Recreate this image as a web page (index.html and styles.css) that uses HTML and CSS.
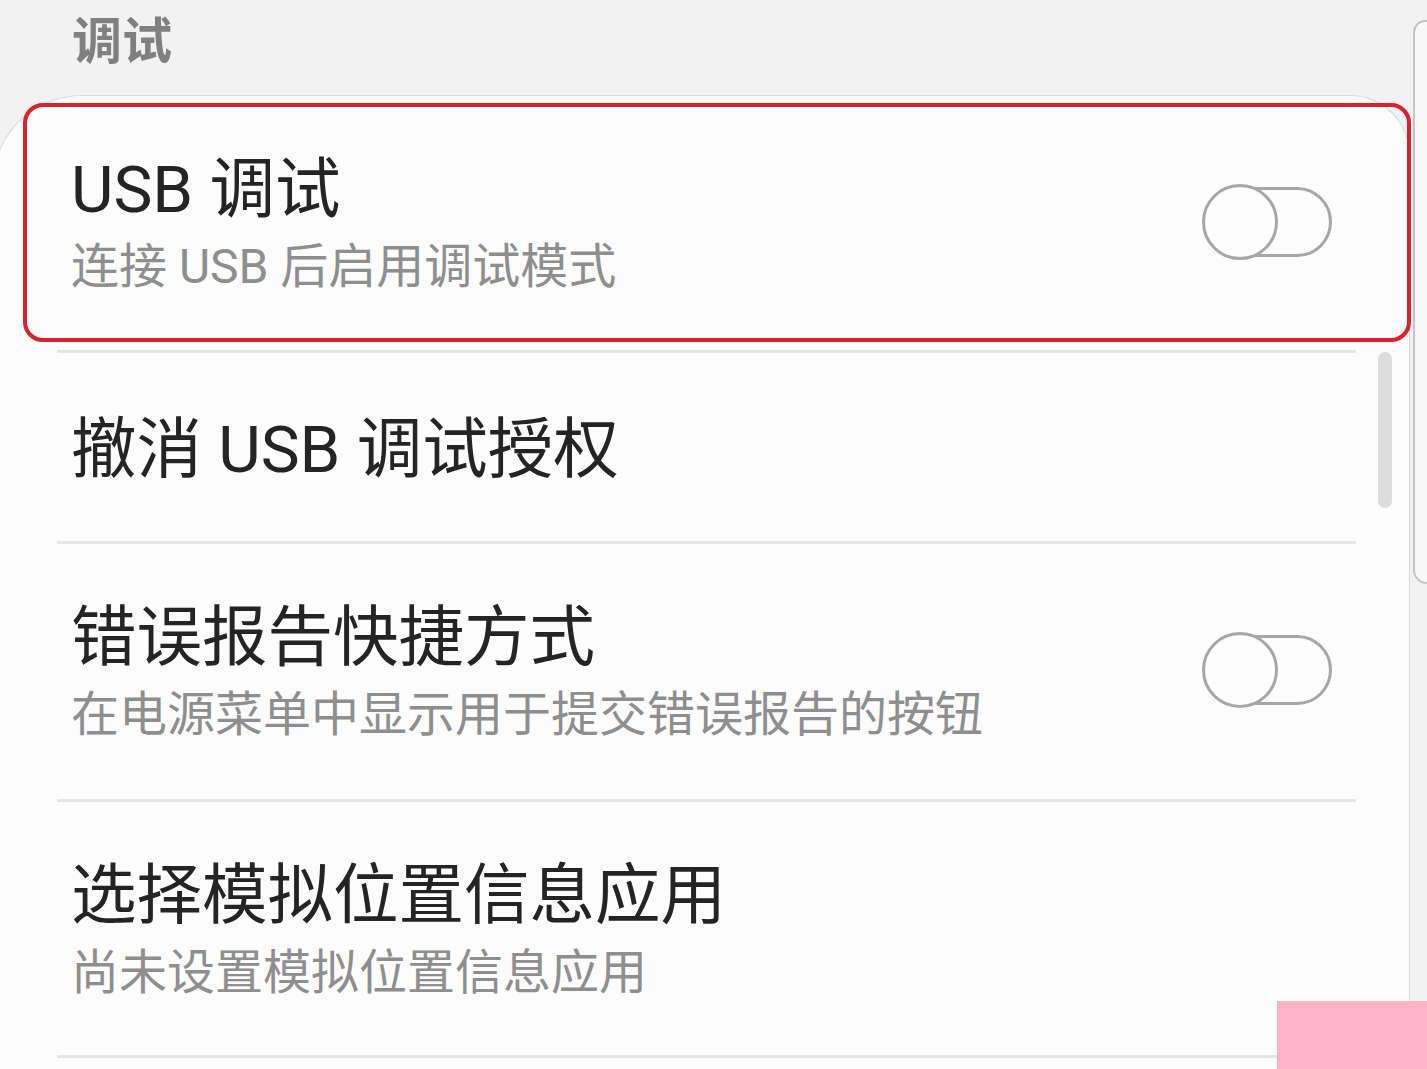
FILE: index.html
```html
<!DOCTYPE html>
<html lang="zh-CN">
<head>
  <meta charset="UTF-8" />
  <meta name="viewport" content="width=device-width, initial-scale=1.0"/>
  <title>开发者选项 - 调试</title>
  <link rel="stylesheet" href="styles.css">
</head>
<body>
  <div class="screen">
    <h2 class="section-title">调试</h2>

    <div class="card">
      <!-- highlight around the first option -->
      <div class="highlight"></div>
      <div class="scrollbar"></div>

      <div class="row first">
        <div class="text">
          <div class="title">USB 调试</div>
          <div class="summary">连接 USB 后启用调试模式</div>
        </div>
        <div class="toggle"><div class="knob"></div></div>
      </div>
      <div class="sep"></div>

      <div class="row single">
        <div class="text">
          <div class="title">撤消 USB 调试授权</div>
        </div>
      </div>
      <div class="sep"></div>

      <div class="row">
        <div class="text">
          <div class="title">错误报告快捷方式</div>
          <div class="summary">在电源菜单中显示用于提交错误报告的按钮</div>
        </div>
        <div class="toggle"><div class="knob"></div></div>
      </div>
      <div class="sep"></div>

      <div class="row last">
        <div class="text">
          <div class="title">选择模拟位置信息应用</div>
          <div class="summary">尚未设置模拟位置信息应用</div>
        </div>
      </div>
      <div class="sep"></div>
    </div>
  </div>

  <div class="edge"></div>

  <div class="corner-tag"></div>
</body>
</html>
```

FILE: styles.css
```css
body {
  margin: 0;
  background: #f2f2f2;
  font-family: Roboto, "Noto Sans CJK SC", sans-serif;
  display: flex;
  align-items: flex-start;
  height: 100vh;
  overflow: hidden;
}

.screen {
  width: 1413px;
  flex-shrink: 0;
}

.section-title {
  margin: 0;
  padding: 12px 0 0 72px;
  height: 60px;
  font-size: 50px;
  line-height: 60px;
  font-weight: 700;
  color: #808080;
}

.card {
  position: relative;
  margin: 23px 3px 0 -8px;
  height: 1000px;
  background: #fcfcfc;
  border: 1px solid #d9d9d9;
  border-bottom: none;
  border-radius: 90px 60px 0 0;
}

.highlight {
  position: absolute;
  top: 7px;
  left: 30px;
  width: 1388px;
  height: 239px;
  box-sizing: border-box;
  border: 4px solid #d8232f;
  border-radius: 20px;
}

.scrollbar {
  position: absolute;
  top: 256px;
  left: 1385px;
  width: 14px;
  height: 156px;
  border-radius: 7px;
  background: #dcdcdc;
}

.row {
  display: flex;
  align-items: center;
  justify-content: space-between;
  box-sizing: border-box;
  height: 255px;
  padding: 0 77px 0 78px;
}

.row.first {
  height: 254px;
}

.row.last {
  height: 253px;
}

.row.single {
  height: 188px;
}

.text {
  align-self: flex-start;
  padding-top: 55px;
}

.row.single .text {
  padding-top: 58px;
}

.title {
  font-size: 65.5px;
  line-height: 78px;
  color: #242424;
}

.summary {
  margin-top: 9px;
  font-size: 48px;
  line-height: 57px;
  color: #8e8e8e;
}

.toggle {
  width: 127px;
  height: 70px;
  box-sizing: border-box;
  border: 3px solid #a6a6a6;
  border-radius: 35px;
  display: flex;
  align-items: center;
  flex-shrink: 0;
  margin-top: -3px;
}

.knob {
  width: 76px;
  height: 76px;
  box-sizing: border-box;
  margin-left: -6px;
  border: 3px solid #a6a6a6;
  border-radius: 50%;
  background: #fcfcfc;
  flex-shrink: 0;
}

.sep {
  height: 3px;
  margin: 0 53px 0 64px;
  background: #e6e6e6;
}

.edge {
  flex: 1;
  margin-top: 20px;
  height: 560px;
  background: #f8f8f8;
  border: 2px solid #c4c4c4;
  border-right: none;
  border-radius: 16px 0 0 18px;
}

.corner-tag {
  position: fixed;
  right: 0;
  bottom: 0;
  width: 150px;
  height: 68px;
  background: #ffb3c8;
}
```
